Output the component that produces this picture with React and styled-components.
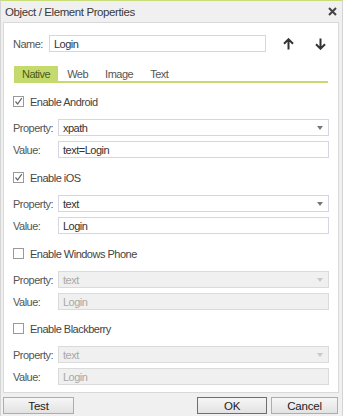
import React from "react";
import styled, { createGlobalStyle } from "styled-components";

const Global = createGlobalStyle`
  html, body { margin: 0; padding: 0; background: #f0f0f0; }
  body { font-family: "Liberation Sans", Arial, sans-serif; }
  * { box-sizing: border-box; }
`;

const Dialog = styled.div`
  width: 343px;
  height: 416px;
  background: #f0f0f0;
  border-top: 1px solid #c8dc78;
  border-left: 1px solid #d4d4d4;
  border-right: 1px solid #d4d4d4;
  display: flex;
  flex-direction: column;
  color: #333;
  font-size: 11px;
  letter-spacing: -0.5px;
`;

const TitleBar = styled.div`
  height: 21px;
  display: flex;
  align-items: center;
  justify-content: space-between;
  padding: 0 5px 0 4px;
  font-size: 11.5px;
  color: #3a3a3a;
  letter-spacing: -0.4px;
`;

const Panel = styled.div`
  margin: 0 3px 0 2px;
  height: 371px;
  background: #fff;
  border: 1px solid #d9d9d9;
  padding: 12px 9px 0 9px;
  display: flex;
  flex-direction: column;
`;

const NameRow = styled.div`
  display: flex;
  align-items: center;
  height: 17px;
`;

const Label = styled.span`
  color: #555;
  width: ${(p) => p.$w || 45}px;
  flex: none;
`;

const TextBox = styled.div`
  height: 17px;
  border: 1px solid ${(p) => (p.$disabled ? "#dadada" : "#d6d6e0")};
  background: ${(p) => (p.$disabled ? "#f0f0f0" : "#fff")};
  color: ${(p) => (p.$disabled ? "#a8a8a8" : "#333")};
  padding: 0 4px;
  display: flex;
  align-items: center;
  width: ${(p) => (p.$w ? p.$w + "px" : "auto")};
  flex: ${(p) => (p.$w ? "none" : "1")};
  position: relative;
`;

const ArrowBtn = styled.div`
  width: 14px;
  height: 14px;
  display: flex;
  align-items: center;
  justify-content: center;
  margin-left: ${(p) => p.$ml}px;
`;

const Tabs = styled.div`
  margin-top: 14px;
  margin-left: 1px;
  margin-right: 1px;
  display: flex;
  border-bottom: 2px solid #c5da6c;
  height: 17px;
`;

const Tab = styled.div`
  height: 15px;
  display: flex;
  align-items: center;
  justify-content: center;
  padding: 0 ${(p) => (p.$active ? 8 : 8)}px;
  margin-right: ${(p) => (p.$active ? 1 : 1)}px;
  background: ${(p) => (p.$active ? "#c5da6c" : "transparent")};
  color: ${(p) => (p.$active ? "#4a5a1a" : "#555")};
`;

const Section = styled.div`
  margin-top: ${(p) => p.$mt}px;
  display: flex;
  flex-direction: column;
`;

const CheckRow = styled.div`
  display: flex;
  align-items: center;
  height: 11px;
  color: #444;
`;

const Box = styled.div`
  width: 11px;
  height: 11px;
  border: 1px solid #999;
  background: #fff;
  margin-right: 6px;
  display: flex;
  align-items: center;
  justify-content: center;
`;

const FieldRow = styled.div`
  display: flex;
  align-items: center;
  margin-top: ${(p) => p.$mt}px;
`;

const Caret = styled.div`
  position: absolute;
  right: 5px;
  top: 6px;
  width: 0;
  height: 0;
  border-left: 3.5px solid transparent;
  border-right: 3.5px solid transparent;
  border-top: 4px solid ${(p) => (p.$disabled ? "#c8c8c8" : "#777")};
`;

const Footer = styled.div`
  display: flex;
  align-items: center;
  padding: 4px 4px 0 2px;
  gap: 4px;
`;

const Button = styled.div`
  width: ${(p) => p.$w}px;
  height: 17px;
  border: 1px solid ${(p) => (p.$focus ? "#6e6e6e" : "#adadad")};
  background: linear-gradient(#f6f6f6, #e2e2e2);
  display: flex;
  align-items: center;
  justify-content: center;
  color: #222;
  font-size: 11.5px;
  letter-spacing: -0.2px;
  margin-left: ${(p) => p.$ml || 0}px;
`;

const Check = () => (
  <svg width="9" height="9" viewBox="0 0 9 9">
    <path d="M1.5 4.5 L3.6 7 L7.8 1.2" fill="none" stroke="#666" strokeWidth="1.2" />
  </svg>
);

const Close = () => (
  <svg width="9" height="9" viewBox="0 0 9 9">
    <path d="M1 1 L8 8 M8 1 L1 8" stroke="#444" strokeWidth="2" />
  </svg>
);

const Up = () => (
  <svg width="11" height="12" viewBox="0 0 11 12">
    <path d="M5.5 11.5 V1.5 M1 5.8 L5.5 1.3 L10 5.8" fill="none" stroke="#333" strokeWidth="2" />
  </svg>
);

const Down = () => (
  <svg width="11" height="12" viewBox="0 0 11 12">
    <path d="M5.5 0.5 V10.5 M1 6.2 L5.5 10.7 L10 6.2" fill="none" stroke="#333" strokeWidth="2" />
  </svg>
);

const platforms = [
  { name: "Enable Android", checked: true, prop: "xpath", value: "text=Login", mt: 13 },
  { name: "Enable iOS", checked: true, prop: "text", value: "Login", mt: 14 },
  { name: "Enable Windows Phone", checked: false, prop: "text", value: "Login", mt: 14 },
  { name: "Enable Blackberry", checked: false, prop: "text", value: "Login", mt: 13 },
];

export default function App() {
  return (
    <>
      <Global />
      <Dialog>
        <TitleBar>
          <span>Object / Element Properties</span>
          <Close />
        </TitleBar>
        <Panel>
          <NameRow>
            <Label $w={36}>Name:</Label>
            <TextBox $w={217}>Login</TextBox>
            <ArrowBtn $ml={15}><Up /></ArrowBtn>
            <ArrowBtn $ml={18}><Down /></ArrowBtn>
          </NameRow>
          <Tabs>
            <Tab $active>Native</Tab>
            <Tab>Web</Tab>
            <Tab>Image</Tab>
            <Tab>Text</Tab>
          </Tabs>
          {platforms.map((p) => (
            <Section key={p.name} $mt={p.mt}>
              <CheckRow>
                <Box>{p.checked && <Check />}</Box>
                {p.name}
              </CheckRow>
              <FieldRow $mt={12}>
                <Label>Property:</Label>
                <TextBox $disabled={!p.checked}>
                  {p.prop}
                  <Caret $disabled={!p.checked} />
                </TextBox>
              </FieldRow>
              <FieldRow $mt={5}>
                <Label>Value:</Label>
                <TextBox $disabled={!p.checked}>{p.value}</TextBox>
              </FieldRow>
            </Section>
          ))}
        </Panel>
        <Footer>
          <Button $w={71}>Test</Button>
          <Button $w={70} $focus $ml={119}>OK</Button>
          <Button $w={67}>Cancel</Button>
        </Footer>
      </Dialog>
    </>
  );
}
